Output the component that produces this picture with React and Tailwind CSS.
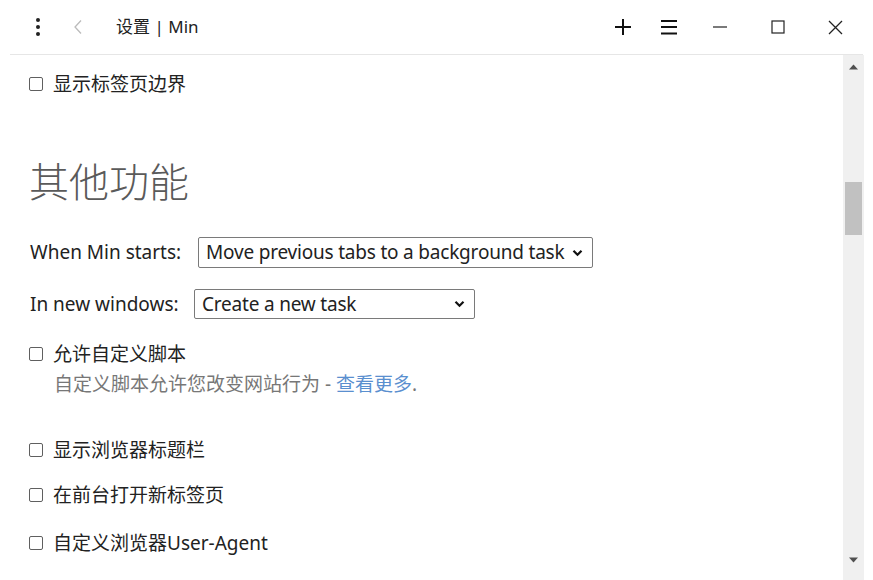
import React from "react";

/** 小复选框 + 标签 */
function CheckRow({ label, className = "" }) {
    return (
        <div className={`flex items-center h-7 ${className}`}>
            <span className="w-[14px] h-[14px] min-w-[14px] border border-[#5f5f5f] rounded-[2px] bg-white ml-[29px] mr-[10px] shrink-0" />
            <span className="text-[19px] text-[#222]">{label}</span>
        </div>
    );
}

function Chevron() {
    return (
        <svg width="11" height="8" viewBox="0 0 11 8" className="shrink-0">
            <path d="M1.5 1.8 L5.5 5.8 L9.5 1.8" fill="none" stroke="#111" strokeWidth="2.2" />
        </svg>
    );
}

function FakeSelect({ value, width, className = "" }) {
    return (
        <div
            className={`flex items-center justify-between border border-[#7a7a7a] rounded-[2px] bg-white pl-[7px] pr-[9px] text-[19px] tracking-[-0.2px] text-[#222] ${className}`}
            style={{ width }}
        >
            <span className="whitespace-nowrap">{value}</span>
            <Chevron />
        </div>
    );
}

function TopBar() {
    return (
        <div className="h-[55px] flex items-center border-b border-[#e6e6e6] mx-[10px] relative">
            {/* 菜单点 */}
            <svg width="6" height="20" viewBox="0 0 6 20" className="ml-[25px]">
                <circle cx="3" cy="3" r="2" fill="#222" />
                <circle cx="3" cy="10" r="2" fill="#222" />
                <circle cx="3" cy="17" r="2" fill="#222" />
            </svg>
            <svg width="10" height="16" viewBox="0 0 10 16" className="ml-[32px]">
                <path d="M8 1.5 L2 8 L8 14.5" fill="none" stroke="#bbb" strokeWidth="1.3" />
            </svg>
            <span className="ml-[33px] text-[17px] text-[#222]">设置 | Min</span>

            <div className="ml-auto flex items-center">
                <svg width="18" height="18" viewBox="0 0 18 18">
                    <path d="M9 1 V17 M1 9 H17" stroke="#111" strokeWidth="2" />
                </svg>
                <svg width="18" height="16" viewBox="0 0 18 16" className="ml-[28px]">
                    <path d="M1 2 H17 M1 8 H17 M1 14.5 H17" stroke="#111" strokeWidth="2.2" />
                </svg>
                <svg width="15" height="4" viewBox="0 0 15 4" className="ml-[35px]">
                    <path d="M0 2 H14" stroke="#222" strokeWidth="1.2" />
                </svg>
                <svg width="14" height="14" viewBox="0 0 14 14" className="ml-[43px]">
                    <rect x="1" y="1" width="12" height="12" fill="none" stroke="#222" strokeWidth="1.2" />
                </svg>
                <svg width="15" height="15" viewBox="0 0 15 15" className="ml-[43px] mr-[20px]">
                    <path d="M1 1 L14 14 M14 1 L1 14" stroke="#222" strokeWidth="1.3" />
                </svg>
            </div>
        </div>
    );
}

function ScrollBar() {
    return (
        <div className="w-[21px] bg-[#f0f0f0] flex flex-col items-center shrink-0">
            <svg width="9" height="6" viewBox="0 0 9 6" className="mt-[9px]">
                <path d="M0 5.5 L4.5 0.5 L9 5.5 Z" fill="#505050" />
            </svg>
            <div className="w-[17px] h-[53px] bg-[#c1c1c1] mt-[112px]" />
            <div className="flex-1" />
            <svg width="9" height="6" viewBox="0 0 9 6" className="mb-[17px]">
                <path d="M0 0.5 L4.5 5.5 L9 0.5 Z" fill="#505050" />
            </svg>
        </div>
    );
}

export default function App() {
    return (
        <div className="w-[873px] h-[580px] bg-white overflow-hidden flex flex-col font-['Noto_Sans','Noto_Sans_CJK_SC',sans-serif]">
            <TopBar />
            <div className="flex flex-1 min-h-0 pr-[9px]">
                <div className="flex-1 pt-[15px]">
                    <CheckRow label="显示标签页边界" />

                    <h2 className="mt-[60px] ml-[29px] h-[48px] leading-[48px] text-[40px] font-light text-[#5a5a5a]">
                        其他功能
                    </h2>

                    <div className="mt-[31px] flex items-center ml-[30px] h-[31px]">
                        <span className="text-[19px] text-[#222] w-[168px]">When Min starts:</span>
                        <FakeSelect value="Move previous tabs to a background task" width={395} className="h-[31px]" />
                    </div>

                    <div className="mt-[21px] flex items-center ml-[30px] h-[30px]">
                        <span className="text-[19px] text-[#222] w-[164px]">In new windows:</span>
                        <FakeSelect value="Create a new task" width={281} className="h-[30px]" />
                    </div>

                    <CheckRow label="允许自定义脚本" className="mt-[21px]" />
                    <p className="ml-[54px] mt-[2px] h-7 leading-7 text-[19px] text-[#777]">
                        自定义脚本允许您改变网站行为 - <span className="text-[#5a8fcf]">查看更多</span>.
                    </p>

                    <CheckRow label="显示浏览器标题栏" className="mt-[38px]" />
                    <CheckRow label="在前台打开新标签页" className="mt-[17px]" />
                    <CheckRow label="自定义浏览器User-Agent" className="mt-[20px]" />
                </div>
                <ScrollBar />
            </div>
        </div>
    );
}
